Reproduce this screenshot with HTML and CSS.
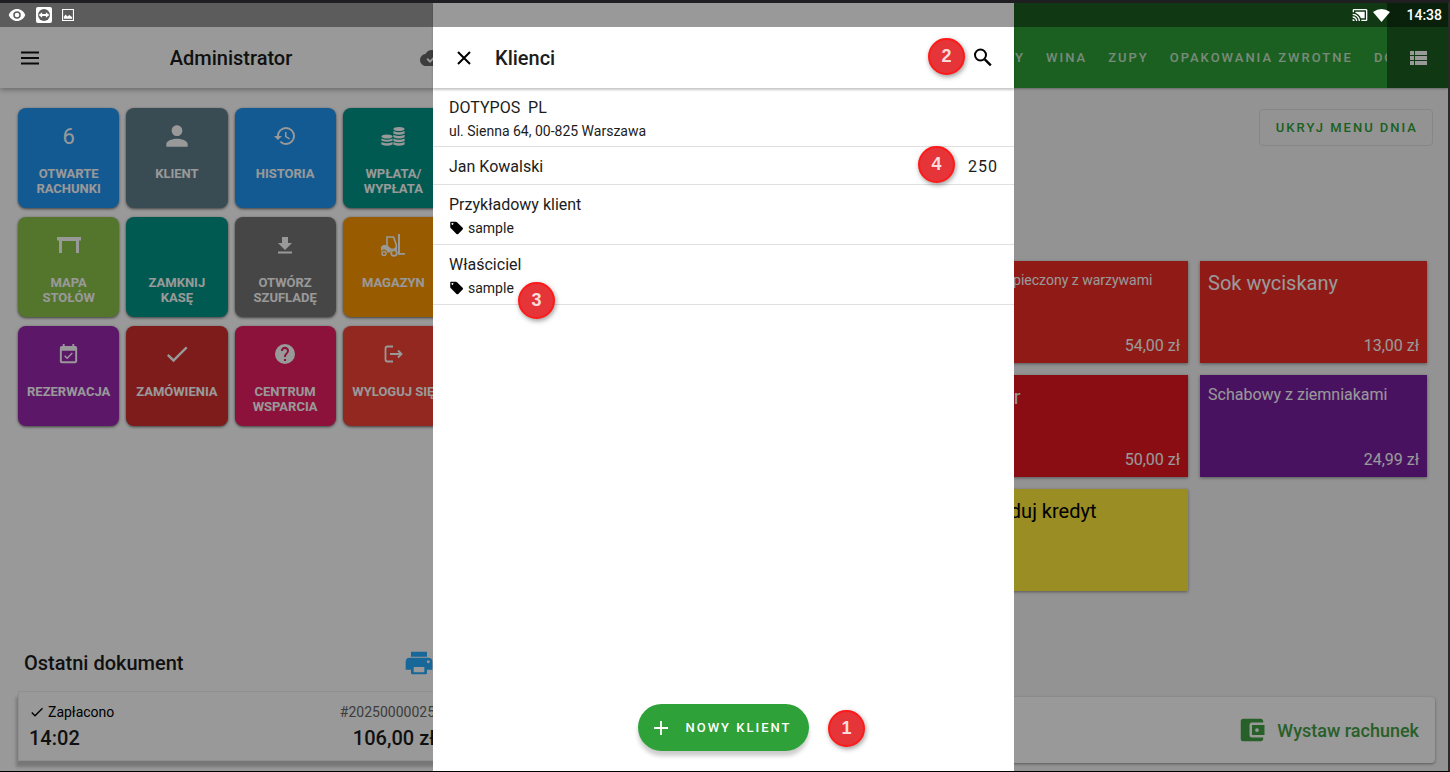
FILE: index.html
```html
<!DOCTYPE html>
<html lang="pl">
<head>
<meta charset="utf-8">
<title>Klienci</title>
<link rel="stylesheet" href="styles.css">
</head>
<body>
<div class="screen">
  <div class="app">
    <section class="side">
      <header class="side-head">
        <button class="icon-btn" aria-label="Menu"><svg width="24" height="24" viewBox="0 0 24 24"><path d="M3 6.600h18M3 12h18M3 17.400h18" fill="none" stroke="#111" stroke-width="2"/></svg></button>
        <h1 class="user">Administrator</h1>
        <svg class="cloud" width="24" height="24" viewBox="0 0 24 24"><path fill="#666" d="M19.35 10.04A7.49 7.49 0 0 0 12 4C9.11 4 6.6 5.64 5.35 8.04A5.994 5.994 0 0 0 0 14c0 3.31 2.69 6 6 6h13c2.76 0 5-2.24 5-5 0-2.64-2.05-4.78-4.65-4.96zM10 17l-3.5-3.5 1.41-1.41L10 14.17l5.18-5.17 1.41 1.41L10 17z"/></svg>
      </header>
      <div class="tiles">
        <button class="tile blue"><span class="tile-icon count">6</span><span>OTWARTE<br>RACHUNKI</span></button>
        <button class="tile slate"><span class="tile-icon"><svg width="32" height="32" viewBox="0 0 24 24"><path d="M12 12c2.21 0 4-1.79 4-4s-1.79-4-4-4-4 1.79-4 4 1.79 4 4 4zm0 2c-2.67 0-8 1.34-8 4v2h16v-2c0-2.66-5.33-4-8-4z"/></svg></span><span>KLIENT</span></button>
        <button class="tile blue"><span class="tile-icon"><svg width="24" height="24" viewBox="0 0 24 24"><path d="M13 3a9 9 0 0 0-9 9H1l3.89 3.89.07.14L9 12H6c0-3.87 3.13-7 7-7s7 3.13 7 7-3.13 7-7 7c-1.93 0-3.68-.79-4.94-2.06l-1.42 1.42A8.954 8.954 0 0 0 13 21a9 9 0 0 0 0-18zm-1 5v5l4.28 2.54.72-1.21-3.5-2.08V8H12z"/></svg></span><span>HISTORIA</span></button>
        <button class="tile teal"><span class="tile-icon"><svg width="24" height="24" viewBox="0 0 24 24"><ellipse cx="6" cy="12.500" rx="5.600" ry="2"/><ellipse cx="18" cy="5" rx="5.600" ry="2"/><path d="M.4 14.500q5.600 2.500 11.200 0v2q-5.600 2.500-11.200 0zM.4 18q5.600 2.500 11.200 0v2.500q-5.600 2.500-11.200 0zM12.400 7q5.600 2.500 11.200 0v2.500q-5.600 2.500-11.200 0zM12.400 10.700q5.600 2.500 11.200 0v2.500q-5.600 2.500-11.200 0zM12.400 14.400q5.600 2.500 11.200 0v2.500q-5.600 2.500-11.200 0zM12.400 18q5.600 2.500 11.200 0v2.500q-5.600 2.500-11.200 0z"/></svg></span><span>WPŁATA/<br>WYPŁATA</span></button>

        <button class="tile lime"><span class="tile-icon"><svg width="24" height="24" viewBox="0 0 24 24"><path d="M0 4h24v3.500h-2V20h-3V8H5v12H2V7.500H0z"/></svg></span><span>MAPA<br>STOŁÓW</span></button>
        <button class="tile teal"><span class="tile-icon"></span><span>ZAMKNIJ<br>KASĘ</span></button>
        <button class="tile gray"><span class="tile-icon"><svg width="24" height="24" viewBox="0 0 24 24"><path d="M19 10h-4V4H9v6H5l7 7 7-7zM5 18.500v2h14v-2H5z"/></svg></span><span>OTWÓRZ<br>SZUFLADĘ</span></button>
        <button class="tile orange"><span class="tile-icon"><svg width="24" height="24" viewBox="0 0 24 24"><path fill="none" stroke="#fff" stroke-width="1.600" d="M6 13V4h6.500l2.800 8v5"/><path d="M0 14l2-2h4l4 3.500h3l2-2V17a4.500 4.500 0 0 0-6.300 2.500H6.300A3.300 3.300 0 0 0 0 18.500z"/><circle cx="3" cy="20.500" r="2" fill="none" stroke="#fff" stroke-width="1.500"/><circle cx="13" cy="20" r="2.800" fill="none" stroke="#fff" stroke-width="1.800"/><path d="M17 1h2v19h5v1.800h-7z"/></svg></span><span>MAGAZYN</span></button>

        <button class="tile purple"><span class="tile-icon"><svg width="23" height="23" viewBox="0 0 24 24"><path d="M16.530 11.060L15.470 10l-4.880 4.880-2.120-2.120-1.060 1.060L10.590 17l5.940-5.940zM19 3h-1V1h-2v2H8V1H6v2H5c-1.110 0-1.990.9-1.990 2L3 19a2 2 0 0 0 2 2h14c1.100 0 2-.9 2-2V5c0-1.100-.9-2-2-2zm0 16H5V8h14v11z"/></svg></span><span>REZERWACJA</span></button>
        <button class="tile red"><span class="tile-icon"><svg width="28" height="28" viewBox="0 0 24 24"><path d="M9 16.170L4.830 12l-1.420 1.410L9 19 21 7l-1.410-1.410z"/></svg></span><span>ZAMÓWIENIA</span></button>
        <button class="tile pink"><span class="tile-icon"><svg width="24" height="24" viewBox="0 0 24 24"><path d="M12 2a10 10 0 1 0 0 20 10 10 0 0 0 0-20zm1 17h-2v-2h2v2zm2.070-7.750-.9.920C13.450 12.900 13 13.500 13 15h-2v-.5c0-1.100.45-2.100 1.170-2.830l1.240-1.260A2 2 0 1 0 10 9H8a4 4 0 1 1 7.070 2.250z"/></svg></span><span>CENTRUM<br>WSPARCIA</span></button>
        <button class="tile coral"><span class="tile-icon"><svg width="24" height="24" viewBox="0 0 24 24"><path d="M12 4.500H6.500q-2 0-2 2v11q0 2 2 2H12M9 12h11M17 8.500l3.500 3.500L17 15.500" fill="none" stroke="#fff" stroke-width="1.800"/></svg></span><span>WYLOGUJ SIĘ</span></button>
      </div>
      <div class="last">
        <div class="last-head">
          <h2 class="last-title">Ostatni dokument</h2>
          <button class="icon-btn" aria-label="Drukuj"><svg width="32" height="32" viewBox="0 0 24 24"><path fill="#28acff" fill-rule="evenodd" d="M6 3.500h12v3.800H6zM5 8h14a3 3 0 0 1 3 3v6h-4v2.500q0 1-1 1H7q-1 0-1-1V17H2v-6a3 3 0 0 1 3-3zm3 7v4h8v-4zm11-5a1.100 1.100 0 1 0 .01 0z"/></svg></button>
        </div>
        <div class="doc">
          <div class="doc-row">
            <span class="paid"><svg width="16" height="16" viewBox="0 0 24 24"><path d="M9 16.170L4.830 12l-1.420 1.410L9 19 21 7l-1.410-1.410z"/></svg>Zapłacono</span>
            <span class="number">#20250000025</span>
          </div>
          <div class="doc-row sum"><span>14:02</span><span>106,00 zł</span></div>
        </div>
      </div>
    </section>

    <section class="main">
      <header class="main-head">
        <nav class="tabs">
          <a href="#">ZESTAWY</a><a href="#">WINA</a><a href="#">ZUPY</a><a href="#">OPAKOWANIA ZWROTNE</a><a href="#">DODATKI</a>
        </nav>
        <button class="view-btn" aria-label="Widok listy"><svg width="24" height="24" viewBox="0 0 24 24"><path d="M4 14h4v-4H4v4zm0 5h4v-4H4v4zM4 9h4V5H4v4zm5 5h12v-4H9v4zm0 5h12v-4H9v4zM9 5v4h12V5H9z"/></svg></button>
      </header>
      <div class="tools"><button class="outline-btn">UKRYJ MENU DNIA</button></div>
      <div class="products">
        <button class="product c3 tomato"><span class="name small">Pstrąg pieczony z warzywami</span><span class="price">54,00 zł</span></button>
        <button class="product tomato"><span class="name">Sok wyciskany</span><span class="price">13,00 zł</span></button>
        <button class="product c3 crimson"><span class="name">Deser</span><span class="price">50,00 zł</span></button>
        <button class="product violet"><span class="name medium">Schabowy z ziemniakami</span><span class="price">24,99 zł</span></button>
        <button class="product c3 yellow"><span class="name">Doładuj kredyt</span></button>
      </div>
      <button class="bill"><svg width="30" height="30" viewBox="0 0 24 24"><path d="M21 18v1c0 1.100-.9 2-2 2H5a2 2 0 0 1-2-2V5a2 2 0 0 1 2-2h14c1.100 0 2 .9 2 2v1h-9a2 2 0 0 0-2 2v8a2 2 0 0 0 2 2h9zm-9-2h10V8H12v8zm4-2.500a1.500 1.500 0 1 1 0-3 1.500 1.500 0 0 1 0 3z"/></svg>Wystaw rachunek</button>
    </section>
  </div>

  <div class="scrim">
    <div class="dialog" role="dialog" aria-labelledby="dialog-title">
      <header class="dialog-head">
        <button class="icon-btn" aria-label="Zamknij"><svg width="24" height="24" viewBox="0 0 24 24"><path d="M6 6l12 12M18 6L6 18" fill="none" stroke="#000" stroke-width="2"/></svg></button>
        <h2 class="dialog-title" id="dialog-title">Klienci</h2>
        <button class="icon-btn" aria-label="Szukaj"><svg width="24" height="24" viewBox="0 0 24 24"><circle cx="9.500" cy="9" r="5.500" fill="none" stroke="#000" stroke-width="2"/><path d="M13.800 13.300l6 6" stroke="#000" stroke-width="2.400"/></svg></button>
      </header>
      <ul class="clients">
        <li class="client"><span class="client-name">DOTYPOS  PL</span><span class="address">ul. Sienna 64, 00-825 Warszawa</span></li>
        <li class="client single"><span class="client-name">Jan Kowalski</span><span class="points">250</span></li>
        <li class="client"><span class="client-name">Przykładowy klient</span><span class="tag"><svg width="15" height="15" viewBox="0 0 24 24"><path fill-rule="evenodd" d="M3 1h8q1 0 1.800.8l9 9q1.500 1.400 0 2.800l-7 7q-1.400 1.500-2.800 0l-9-9Q2 10.800 2 10V2q0-1 1-1zm2.500 2a1.500 1.500 0 1 0 .01 0z"/></svg>sample</span></li>
        <li class="client"><span class="client-name">Właściciel</span><span class="tag"><svg width="15" height="15" viewBox="0 0 24 24"><path fill-rule="evenodd" d="M3 1h8q1 0 1.800.8l9 9q1.500 1.400 0 2.800l-7 7q-1.400 1.500-2.800 0l-9-9Q2 10.800 2 10V2q0-1 1-1zm2.500 2a1.500 1.500 0 1 0 .01 0z"/></svg>sample</span></li>
      </ul>
      <div class="dialog-foot">
        <button class="fab"><svg width="24" height="24" viewBox="0 0 24 24"><path d="M12 5v14M5 12h14" stroke="#fff" stroke-width="1.800"/></svg>NOWY KLIENT</button>
      </div>
      <span class="badge b1">1</span>
      <span class="badge b2">2</span>
      <span class="badge b3">3</span>
      <span class="badge b4">4</span>
    </div>
  </div>

  <div class="status">
    <svg width="18" height="18" viewBox="0 0 24 24"><path fill-rule="evenodd" d="M12 4C7 4 2.730 7.300 1 12c1.730 4.700 6 8 11 8s9.270-3.300 11-8c-1.730-4.700-6-8-11-8zm0 13a5 5 0 1 1 0-10 5 5 0 0 1 0 10zm0-8a3 3 0 1 0 0 6 3 3 0 0 0 0-6z"/></svg>
    <svg width="16" height="16" viewBox="0 0 17 17"><rect width="17" height="17" rx="2"/><circle cx="8.500" cy="8.500" r="6.300" fill="#5c5c5c"/><path d="M2.800 8.500l3.700-3v2h4v-2l3.700 3-3.700 3v-2h-4v2z"/></svg>
    <svg width="12" height="12" viewBox="0 0 13 13"><path fill-rule="evenodd" d="M0 0h13v13H0zm1.200 1.200v10.600h10.600V1.200zM2 10.500V8.500l2-2.500 1.800 2L8 6.500l3 2.500v1.500z"/></svg>
    <span class="spacer"></span>
    <svg width="16" height="16" viewBox="0 0 24 24"><path d="M1 18v3h3c0-1.660-1.340-3-3-3zm0-4v2c2.760 0 5 2.240 5 5h2a7 7 0 0 0-7-7zm0-4v2a9 9 0 0 1 9 9h2c0-6.080-4.930-11-11-11zM5 7v1.600c4 1.400 7 4.400 8.400 8.400H19V7H5zM21 3H3c-1.100 0-2 .9-2 2v3h2V5h18v14h-7v2h7c1.100 0 2-.9 2-2V5c0-1.100-.9-2-2-2z"/></svg>
    <svg width="17" height="13" viewBox="0 0 17 13"><path d="M8.500 13L0 3q8.500-6 17 0z"/></svg>
    <time class="clock">14:38</time>
  </div>
</div>
</body>
</html>
```

FILE: styles.css
```css
* { box-sizing: border-box; }

body {
  margin: 0;
  font-family: Roboto, "Noto Sans", sans-serif;
  color: #1c1c1c;
}

button {
  font: inherit;
  color: inherit;
  border: 0;
  padding: 0;
  background: none;
}

h1, h2, ul { margin: 0; padding: 0; }
svg { display: block; flex: none; }
.icon-btn { display: flex; }

.screen {
  position: relative;
  height: 100vh;
  min-height: 640px;
  border-top: 3px solid #1f1f21;
  border-right: 2px solid #2a2a2a;
  border-bottom: 1px solid #000;
  overflow: hidden;
}

.app {
  display: grid;
  grid-template-columns: 462px 1fr;
  height: 100%;
}

/* Left panel */
.side { display: flex; flex-direction: column; background: #fff; }

.side-head {
  display: flex;
  align-items: center;
  justify-content: space-between;
  height: 85px;
  padding: 24px 18px 0;
  box-shadow: 0 2px 5px rgba(0, 0, 0, .3);
}

.user, .dialog-title, .last-title { font-size: 20px; font-weight: 500; }

.tiles {
  display: grid;
  grid-template-columns: repeat(4, 1fr);
  grid-auto-rows: 100px;
  gap: 9px 7px;
  padding: 20px 18px;
}

.tile {
  display: flex;
  flex-direction: column;
  align-items: center;
  gap: 12px;
  padding-top: 10px;
  border-radius: 8px;
  color: #fff;
  fill: #fff;
  font-size: 13px;
  line-height: 15px;
  font-weight: 700;
  white-space: nowrap;
  box-shadow: 0 1px 3px rgba(0, 0, 0, .6);
}

.tile-icon { display: flex; align-items: center; justify-content: center; height: 36px; }
.count { font-size: 22px; font-weight: 400; }

.blue { background: #2196f3; }
.slate { background: #607d8b; }
.teal { background: #009688; }
.lime { background: #8bc34a; }
.gray { background: #757575; }
.orange { background: #ff9800; }
.purple { background: #9c27b0; }
.red { background: #d32f2f; }
.pink { background: #e91e63; }
.coral { background: #f44336; }

.last { margin-top: auto; padding: 0 0 10px 18px; }

.last-head {
  display: flex;
  align-items: center;
  justify-content: space-between;
  padding: 0 27px 12px 6px;
}

.doc {
  padding: 8px 26px 8px 10px;
  border: 1px solid #eee;
  background: #fff;
  box-shadow: -2px 6px 3px rgba(0, 0, 0, .22);
}

.doc-row { display: flex; justify-content: space-between; font-size: 14px; line-height: 24px; }
.doc-row.sum { font-size: 20px; line-height: 28px; font-weight: 500; }
.paid { display: flex; align-items: center; gap: 3px; color: #000; }
.number { color: #666; }

/* Right panel */
.main { display: flex; flex-direction: column; min-width: 0; background: #f5f5f5; }
.main-head { display: flex; height: 85px; background: #2ea138; box-shadow: 0 1px 2px rgba(0, 0, 0, .3); }

.tabs {
  display: flex;
  flex: 1;
  align-items: center;
  gap: 21px;
  min-width: 0;
  padding: 24px 0 0 491px;
  overflow: hidden;
}

.tabs a {
  flex: none;
  color: rgba(255, 255, 255, .75);
  font-size: 13px;
  font-weight: 500;
  letter-spacing: 2px;
  text-decoration: none;
}

.view-btn {
  display: flex;
  align-items: center;
  justify-content: center;
  width: 61px;
  padding-top: 24px;
  background: #1b5e20;
  fill: #fff;
}

.tools { display: flex; justify-content: flex-end; padding: 21px 15px 115px; }

.outline-btn {
  height: 37px;
  padding: 0 14px 0 16px;
  border: 1px solid #e0e0e0;
  border-radius: 4px;
  color: #2ea138;
  font-size: 13px;
  font-weight: 500;
  letter-spacing: 2px;
}

.products {
  display: grid;
  grid-template-columns: repeat(4, 1fr);
  grid-auto-rows: 102px;
  gap: 12px;
  padding: 0 21px;
}

.product {
  display: flex;
  flex-direction: column;
  justify-content: space-between;
  padding: 10px 8px 6px;
  color: #fff;
  text-align: left;
  white-space: nowrap;
  box-shadow: 0 1px 3px rgba(0, 0, 0, .4);
}

.c3 { grid-column: 3; }
.name { font-size: 20px; line-height: 24px; }
.name.medium { font-size: 16px; line-height: 20px; }
.name.small { font-size: 14px; line-height: 18px; }
.price { align-self: flex-end; font-size: 16px; line-height: 22px; }

.tomato { background: #ee2c26; }
.crimson { background: #e81722; }
.violet { background: #7b1fa2; }
.yellow { background: #ffeb3b; color: #000; }

.bill {
  display: flex;
  align-items: center;
  justify-content: flex-end;
  gap: 10px;
  height: 66px;
  margin: auto 13px 8px 22px;
  padding: 0 16px;
  border-radius: 4px;
  background: #fff;
  color: #43a047;
  fill: #43a047;
  font-size: 18px;
  font-weight: 500;
  box-shadow: 0 1px 3px rgba(0, 0, 0, .4);
}

/* Client dialog */
.scrim {
  position: absolute;
  inset: 0;
  display: flex;
  justify-content: center;
  padding-right: 1px;
  background: rgba(0, 0, 0, .4);
}

.dialog {
  position: relative;
  display: flex;
  flex-direction: column;
  width: 581px;
  background: #fff;
}

.dialog-head {
  display: flex;
  align-items: center;
  height: 85px;
  padding: 24px 19px 0 19px;
  box-shadow: 0 2px 2px rgba(0, 0, 0, .22);
}

.dialog-title { margin-left: 19px; margin-right: auto; }

.clients { flex: 1; list-style: none; }
.client { display: flex; flex-direction: column; padding: 8px 16px 4px; border-bottom: 1px solid #e0e0e0; }
.client.single { flex-direction: row; justify-content: space-between; padding-bottom: 5px; }
.client-name { font-size: 16px; line-height: 24px; white-space: pre; }
.points { font-size: 16px; line-height: 24px; letter-spacing: 1px; }
.address { font-size: 14px; line-height: 22px; }
.tag { display: flex; align-items: center; gap: 4px; font-size: 14px; line-height: 23px; fill: #000; }

.dialog-foot { display: flex; justify-content: center; padding-bottom: 20px; }

.fab {
  display: flex;
  align-items: center;
  gap: 12px;
  height: 47px;
  padding: 0 17px 0 11px;
  border-radius: 24px;
  background: #2ea138;
  color: #fff;
  font-size: 13px;
  font-weight: 500;
  letter-spacing: 2px;
  box-shadow: 0 5px 4px rgba(0, 0, 0, .2);
}

.badge {
  position: absolute;
  display: flex;
  align-items: center;
  justify-content: center;
  width: 37px;
  height: 37px;
  border: 2px solid #ff1a1a;
  border-radius: 50%;
  background: #e53538;
  color: #fbdcdc;
  font: 700 18px "Liberation Sans", Arial, sans-serif;
  box-shadow: 1px 2px 5px rgba(0, 0, 0, .4);
}

.b1 { right: 149px; bottom: 24px; }
.b2 { right: 49px; top: 35px; }
.b3 { left: 85px; top: 279px; }
.b4 { right: 59px; top: 143px; }

/* System bar */
.status {
  position: absolute;
  inset: 0 0 auto;
  display: flex;
  align-items: center;
  gap: 10px;
  height: 24px;
  padding: 0 6px 0 8px;
  background: rgba(0, 0, 0, .4);
  color: #fff;
  fill: #fff;
}

.status .spacer { flex: 1; }
.status svg:nth-of-type(4) { margin-right: -5px; }
.clock { padding-left: 6px; font-size: 14px; font-weight: 500; }
```
